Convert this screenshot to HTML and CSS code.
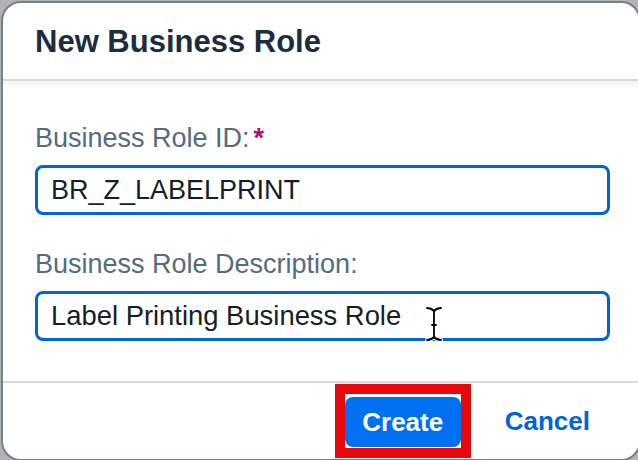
FILE: index.html
```html
<!DOCTYPE html>
<html lang="en">
<head>
<meta charset="utf-8">
<title>New Business Role</title>
<link rel="stylesheet" href="styles.css">
</head>
<body>
<div class="dialog">
  <header class="dialog-header">
    <h1 class="dialog-title">New Business Role</h1>
  </header>
  <main class="dialog-content">
    <label class="field-label">Business Role ID:<span class="required">*</span></label>
    <div class="input">BR_Z_LABELPRINT</div>
    <label class="field-label second">Business Role Description:</label>
    <div class="input input-desc">Label Printing Business Role
      <svg class="ibeam" width="20" height="36" viewBox="0 0 20 36" aria-hidden="true">
        <g fill="none" stroke="#ffffff" stroke-width="4" stroke-linecap="round">
          <path d="M3 2 Q7 2 10 5 Q13 2 17 2"/>
          <path d="M10 5 V31"/>
          <path d="M3 34 Q7 34 10 31 Q13 34 17 34"/>
          <path d="M8 19 H12"/>
        </g>
        <g fill="none" stroke="#000000" stroke-width="1.8" stroke-linecap="round">
          <path d="M3 2 Q7 2 10 5 Q13 2 17 2"/>
          <path d="M10 5 V31"/>
          <path d="M3 34 Q7 34 10 31 Q13 34 17 34"/>
          <path d="M8 19 H12"/>
        </g>
      </svg>
    </div>
  </main>
  <footer class="dialog-footer">
    <div class="highlight">
      <button class="btn btn-emph">Create</button>
    </div>
    <button class="btn btn-transparent">Cancel</button>
  </footer>
</div>
</body>
</html>
```
FILE: styles.css
```css
html, body {
  margin: 0;
  padding: 0;
}
body {
  width: 638px;
  height: 460px;
  overflow: hidden;
  background: #b1b3b5;
  font-family: "Liberation Sans", Arial, sans-serif;
}
.dialog {
  box-sizing: border-box;
  margin: 1px 0 0 1px;
  width: 640px;
  height: 460px;
  border: 2px solid #76808a;
  border-radius: 20px;
  background: #ffffff;
  overflow: hidden;
  display: flex;
  flex-direction: column;
}
.dialog-header {
  position: relative;
  z-index: 1;
  padding: 22px 0 20px 32px;
  border-bottom: 2px solid #d9d9d9;
  box-shadow: 0 3px 6px rgba(0, 0, 0, 0.06);
}
.dialog-title {
  margin: 0;
  font-size: 31px;
  line-height: 34px;
  font-weight: 700;
  color: #1d2d3e;
}
.dialog-content {
  flex: 1;
  padding: 41px 29px 0 32px;
  display: flex;
  flex-direction: column;
}
.field-label {
  display: block;
  font-size: 27px;
  line-height: 32px;
  color: #556b82;
  margin-bottom: 11px;
}
.field-label.second {
  margin-top: 33px;
  margin-bottom: 11px;
}
.required {
  color: #ba066c;
  font-weight: 700;
  margin-left: 4px;
}
.input {
  position: relative;
  box-sizing: border-box;
  height: 50px;
  padding: 6px 13px;
  border: 3px solid #0064d9;
  border-radius: 8px;
  font-size: 27px;
  line-height: 32px;
  color: #131e29;
  white-space: nowrap;
}
.input-desc {
  font-size: 27.4px;
}
.ibeam {
  position: absolute;
  left: 386px;
  top: 12px;
}
.dialog-footer {
  height: 74px;
  border-top: 2px solid #d9d9d9;
  display: flex;
  justify-content: flex-end;
  align-items: center;
  padding: 1px 35px 1px 0;
}
.highlight {
  border: 10px solid #e8080b;
  padding: 3px 0 1px;
  background: #ffffff;
  display: flex;
}
.btn {
  font-family: "Liberation Sans", Arial, sans-serif;
  font-size: 26px;
  font-weight: 700;
  line-height: 29px;
  border: none;
  cursor: pointer;
}
.btn-emph {
  width: 116px;
  height: 50px;
  border-radius: 8px;
  background: #0070f2;
  color: #ffffff;
  padding: 0;
}
.btn-transparent {
  margin-left: 20px;
  height: 50px;
  padding: 0 14px;
  background: transparent;
  color: #0064d9;
}
```
